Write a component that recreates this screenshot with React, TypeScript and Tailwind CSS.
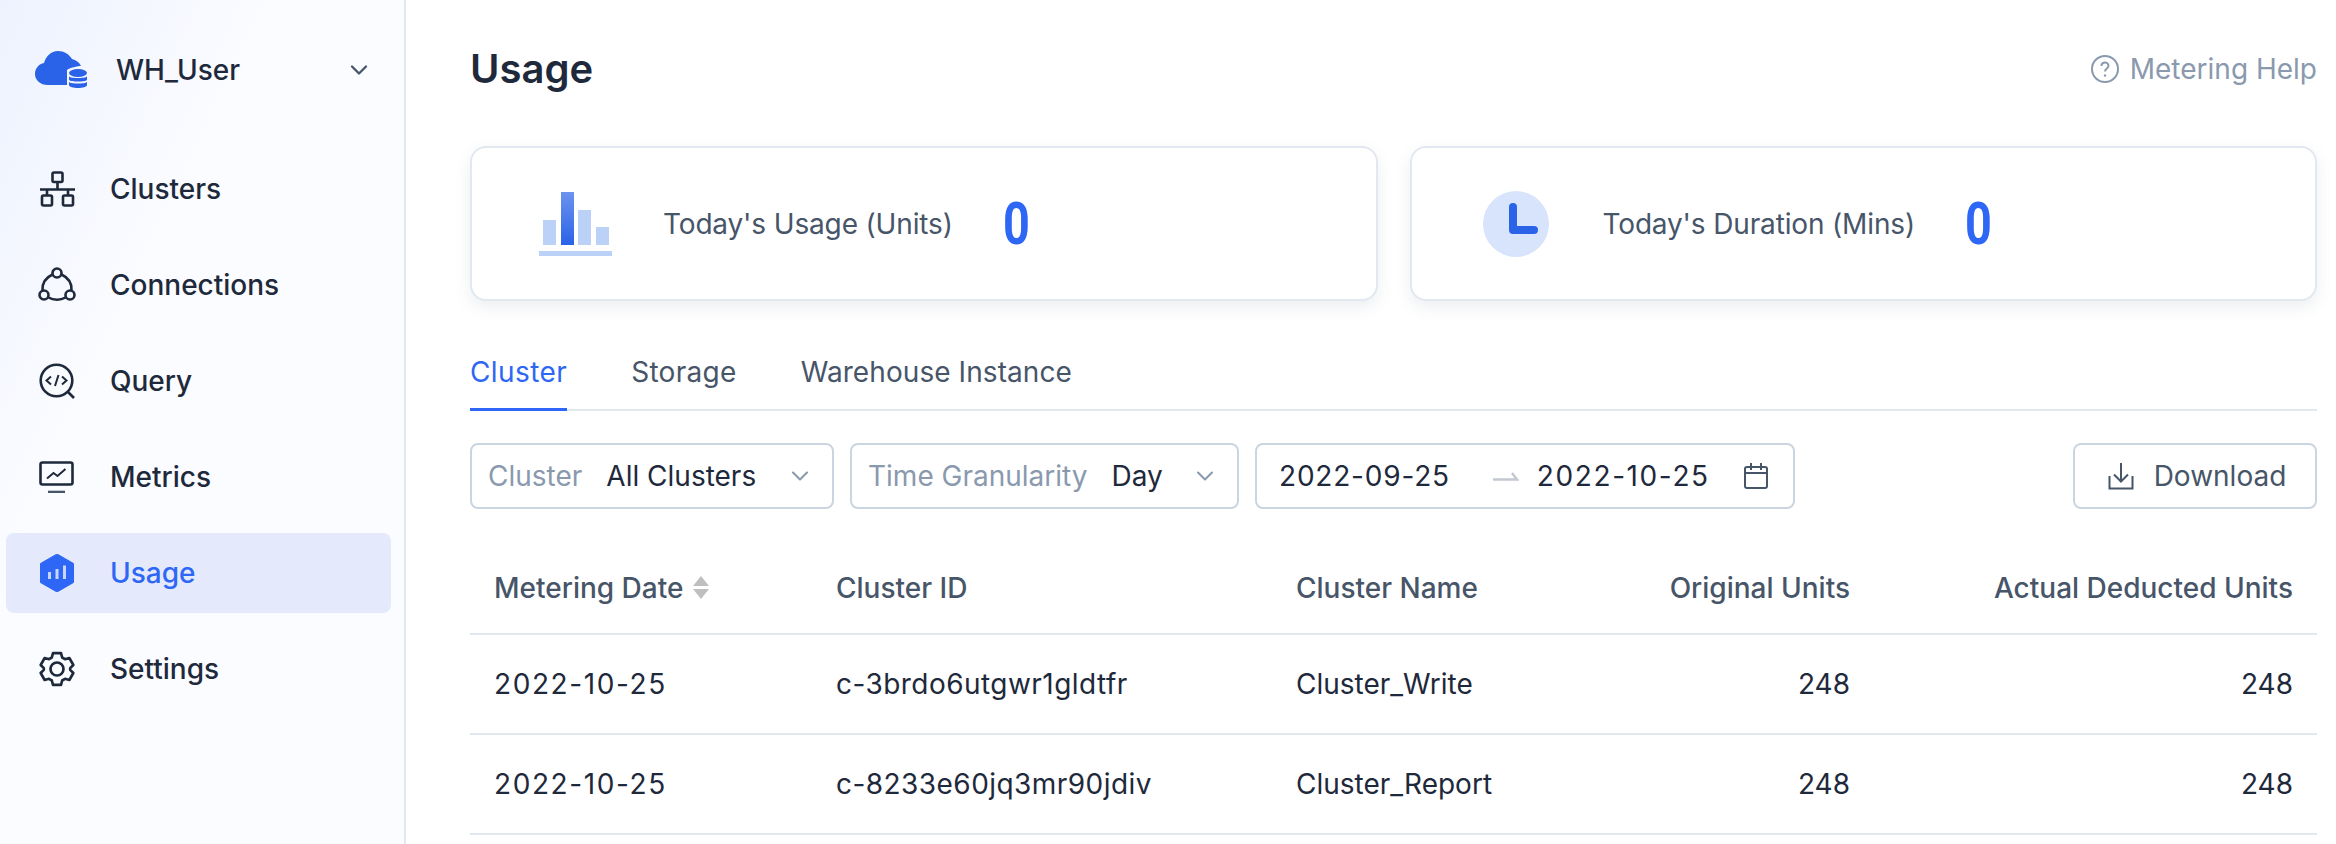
import { ChevronDown } from "lucide-react";
import type { ReactNode } from "react";

const NAV_ITEMS: { label: string; icon: ReactNode; active?: boolean }[] = [
	{
		label: "Clusters",
		icon: (
			<svg viewBox="0 0 36 36" className="w-9 h-9" fill="none" stroke="#1e293b" strokeWidth="2.6">
				<rect x="13.5" y="1.5" width="10" height="9.5" rx="1.5" />
				<rect x="3" y="24.5" width="10" height="10" rx="1.5" />
				<rect x="24" y="24.5" width="10" height="10" rx="1.5" />
				<path d="M18.500 11v7M1 18.500h35M8 18.500v6M29 18.500v6" />
			</svg>
		),
	},
	{
		label: "Connections",
		icon: (
			<svg viewBox="0 0 38 36" className="w-[38px] h-9" fill="none" stroke="#1e293b" strokeWidth="2.6">
				<circle cx="19" cy="6" r="4.500" />
				<circle cx="6" cy="28" r="4.500" />
				<circle cx="32" cy="28" r="4.500" />
				<path d="M14.500 7.500C8 10.500 4 16 4.500 23.500M23.500 7.500C30 10.500 34 16 33.500 23.500M10.500 30.500c5 3 12 3 17 0" />
			</svg>
		),
	},
	{
		label: "Query",
		icon: (
			<svg viewBox="0 0 36 36" className="w-9 h-9" fill="none" stroke="#1e293b" strokeWidth="2.6">
				<circle cx="17.500" cy="17.500" r="15.800" />
				<path d="M29 29l6 6" />
				<path d="M12 13.500l-4.500 4 4.500 4M23 13.500l4.500 4-4.500 4M19.500 12l-3.500 11" strokeWidth="2" />
			</svg>
		),
	},
	{
		label: "Metrics",
		icon: (
			<svg viewBox="0 0 36 32" className="w-9 h-8" fill="none" stroke="#1e293b" strokeWidth="2.6">
				<rect x="1.500" y="1.500" width="32" height="22" rx="2" />
				<path d="M9 31h17" strokeWidth="2.600" stroke="#475569" />
				<path d="M8 17.500l6.500-5.500 4 3 8-7" strokeWidth="2" />
			</svg>
		),
	},
	{
		label: "Usage",
		active: true,
		icon: (
			<svg viewBox="0 0 36 38" className="w-9 h-[38px]">
				<path d="M18 0l16.500 9.500v19L18 38 1.500 28.500v-19z" fill="#2e66f5" stroke="#2e66f5" strokeLinejoin="round" />
				<path d="M9 18h3v7H9zM16.500 15h3v10h-3zM24 11.500h3V25h-3z" fill="#c7d6fb" />
			</svg>
		),
	},
	{
		label: "Settings",
		icon: (
			<svg viewBox="0 0 24 24" className="w-10 h-10" fill="none" stroke="#1e293b" strokeWidth="1.600" strokeLinejoin="round">
				<path d="M9.600 2.500h4.800l.7 2.600 1.700 1 2.600-.7 2.400 4.200-1.900 1.900v1l1.900 1.900-2.400 4.200-2.600-.7-1.700 1-.7 2.600H9.600l-.7-2.600-1.700-1-2.600.7-2.400-4.200 1.900-1.900v-1L2.200 9.600l2.400-4.200 2.600.7 1.700-1z" />
				<circle cx="12" cy="12" r="3.900" />
			</svg>
		),
	},
];

const ROWS = [
	{ date: "2022-10-25", id: "c-3brdo6utgwr1gldtfr", name: "Cluster_Write" },
	{ date: "2022-10-25", id: "c-8233e60jq3mr90jdiv", name: "Cluster_Report" },
];

function Sidebar() {
	return (
		<aside className="w-[406px] shrink-0 border-r-2 border-[#e2e8f0] bg-gradient-to-br from-[#edf2fe] via-[#fbfcff] via-35% to-[#fbfcff] px-1.5">
			<div className="flex items-center h-[140px] pl-7 pr-[25px]">
				<svg viewBox="0 0 54 40" className="w-[54px] h-10 shrink-0">
					<path
						d="M14 35C6 35 1 30 1 24c0-6 4-10 9-11C12 6 17 1 24 1c6 0 11 3 14 8 4 1 7 3 9 7-3 0-12 2-14 4v15z"
						fill="#2a62e8"
					/>
					<ellipse cx="44" cy="23" rx="9" ry="4" fill="#2a62e8" />
					<path d="M35 26.500c2 2 16 2 18 0V30c-2 2-16 2-18 0zM35 32c2 2 16 2 18 0v3c0 4-18 4-18 0z" fill="#2a62e8" />
				</svg>
				<span className="ml-7 flex-1 text-[28px] font-medium text-[#1e293b]">WH_User</span>
				<ChevronDown className="w-7 h-7 text-[#475569]" />
			</div>
			<nav className="mt-[9px] flex flex-col gap-4">
				{NAV_ITEMS.map((item) => (
					<div
						key={item.label}
						className={`flex items-center h-20 w-[385px] rounded-lg ${item.active ? "bg-[#e4eafc]" : ""}`}
					>
						<div className="w-[104px] pr-[3px] flex justify-center">{item.icon}</div>
						<span className={`text-[28px] font-medium ${item.active ? "text-[#2e66f5]" : "text-[#1e293b]"}`}>
							{item.label}
						</span>
					</div>
				))}
			</nav>
		</aside>
	);
}

function StatCard({ icon, label, value }: { icon: ReactNode; label: string; value: string }) {
	return (
		<div className="flex-1 h-[155px] flex items-center rounded-2xl border-2 border-[#e2e8f0] bg-white shadow-[0_6px_16px_rgba(100,116,139,0.12)]">
			<div className="w-[191px] pl-3 flex justify-center">{icon}</div>
			<span className="text-[28px] tracking-[-0.15px] text-[#475569]">{label}</span>
			<span className="ml-[50px] text-[60px] leading-none font-bold font-['Roboto',sans-serif] text-[#2e66f5] origin-left scale-x-[0.78]">
				{value}
			</span>
		</div>
	);
}

function SelectBox({ label, value, className }: { label: string; value: string; className: string }) {
	return (
		<div className={`flex items-center h-[66px] rounded-lg border-2 border-[#cbd5e1] pl-4 pr-[18px] ${className}`}>
			<span className="text-[28px] text-[#8a99ad]">{label}</span>
			<span className="ml-6 flex-1 text-[28px] text-[#1e293b]">{value}</span>
			<ChevronDown className="w-7 h-7 text-[#8a99ad]" strokeWidth={1.800} />
		</div>
	);
}

export default function App() {
	return (
		<div className="flex h-[844px] overflow-hidden bg-white font-['Inter',sans-serif]">
			<Sidebar />
			<main className="flex-1 min-w-0 pl-16 pr-[19px]">
				<div className="flex items-center justify-between h-[140px] pb-[2px]">
					<h1 className="text-[40px] font-semibold text-[#1e293b]">Usage</h1>
					<div className="flex items-center gap-[11px] text-[28px] text-[#8a99ad]">
						<svg viewBox="0 0 28 28" className="w-7 h-7" fill="none" stroke="#8a99ad" strokeWidth="2">
							<circle cx="14" cy="14" r="13" />
							<path d="M10.500 11c0-2 1.500-3.500 3.500-3.500s3.500 1.500 3.500 3.300c0 2.700-3.500 2.700-3.500 5.700" />
							<circle cx="14" cy="20.500" r="1.200" fill="#8a99ad" stroke="none" />
						</svg>
						Metering Help
					</div>
				</div>

				<div className="mt-1.5 flex gap-8">
					<StatCard
						label="Today's Usage (Units)"
						value="0"
						icon={
							<svg viewBox="0 0 73 64" className="w-[73px] h-16 ml-[3px]">
								<defs>
									<linearGradient id="bar" x1="0" y1="0" x2="0" y2="1">
										<stop offset="0" stopColor="#6c93ee" />
										<stop offset="1" stopColor="#2a62e8" />
									</linearGradient>
								</defs>
								<rect x="4" y="28" width="13" height="25" fill="#bcd1f8" />
								<rect x="22" y="0" width="13" height="53" fill="url(#bar)" />
								<rect x="39" y="18" width="13" height="35" fill="#bcd1f8" />
								<rect x="57" y="35" width="13" height="18" fill="#bcd1f8" />
								<rect x="0" y="59" width="73" height="5" fill="#bcd1f8" />
							</svg>
						}
					/>
					<StatCard
						label="Today's Duration (Mins)"
						value="0"
						icon={
							<svg viewBox="0 0 66 66" className="w-[66px] h-[66px] ml-1.5">
								<circle cx="33" cy="33" r="33" fill="#d8e4fb" />
								<path d="M30 16v23h21" fill="none" stroke="#2a62e8" strokeWidth="8" strokeLinecap="round" strokeLinejoin="round" />
							</svg>
						}
					/>
				</div>

				<div className="mt-[50px] flex gap-16 h-[60px] border-b-2 border-[#e2e8f0] text-[28px] text-[#475569]">
					<div className="h-[60px] tracking-[0.4px] border-b-[3px] border-[#2e66f5] text-[#2e66f5]">Cluster</div>
					<div className="tracking-[0.3px]">Storage</div>
					<div className="tracking-[0.08px]">Warehouse Instance</div>
				</div>

				<div className="mt-8 flex items-center gap-4">
					<SelectBox label="Cluster" value="All Clusters" className="w-[364px]" />
					<SelectBox label="Time Granularity" value="Day" className="w-[389px]" />
					<div className="flex items-center w-[540px] h-[66px] rounded-lg border-2 border-[#cbd5e1] pl-[22px] pr-[25px] text-[28px] text-[#1e293b]">
						<span className="tracking-[0.8px]">2022-09-25</span>
						<svg viewBox="0 0 26 12" className="ml-[43px] mr-[18px] w-[26px] h-3" fill="none" stroke="#c4c9d1" strokeWidth="2.500">
							<path d="M0 9.500h24L19 3" />
						</svg>
						<span className="tracking-[1.6px]">2022-10-25</span>
						<svg viewBox="0 0 24 26" className="ml-auto w-6 h-[26px]" fill="none" stroke="#475569" strokeWidth="2">
							<rect x="1" y="4" width="22" height="21" rx="2" />
							<path d="M1 10h22M7 0v7M17 0v7" />
						</svg>
					</div>
					<div className="ml-auto flex items-center justify-center gap-[20px] w-[244px] h-[66px] pl-1 rounded-lg border-2 border-[#cbd5e1] text-[28px] text-[#475569]">
						<svg viewBox="0 0 26 28" className="w-[26px] h-7" fill="none" stroke="#475569" strokeWidth="2">
							<path d="M13 1v18M6 12.500l7 7 7-7" />
							<path d="M1.500 14v12.500h23V14" />
						</svg>
						Download
					</div>
				</div>

				<table className="mt-[31px] w-full table-fixed text-[28px]">
					<colgroup>
						<col className="w-[342px]" />
						<col className="w-[460px]" />
						<col className="w-[330px]" />
						<col className="w-[272px]" />
						<col />
					</colgroup>
					<thead className="text-[#475569]">
						<tr className="h-[94px] border-b-2 border-[#e2e8f0]">
							<th className="pl-6 pt-[2px] text-left font-medium">
								<span className="inline-flex items-center gap-[10px]">
									Metering Date
									<span className="flex flex-col gap-[3px]">
										<span className="w-0 h-0 border-x-[8px] border-x-transparent border-b-[10px] border-b-[#bfbfbf]" />
										<span className="w-0 h-0 border-x-[8px] border-x-transparent border-t-[10px] border-t-[#bfbfbf]" />
									</span>
								</span>
							</th>
							<th className="pl-6 pt-[2px] text-left font-medium">Cluster ID</th>
							<th className="pl-6 pt-[2px] text-left font-medium">Cluster Name</th>
							<th className="pr-6 pt-[2px] text-right font-medium">Original Units</th>
							<th className="pr-6 pt-[2px] text-right font-medium">Actual Deducted Units</th>
						</tr>
					</thead>
					<tbody className="text-[#1e293b]">
						{ROWS.map((row) => (
							<tr key={row.id} className="h-[100px] border-b-2 border-[#e2e8f0]">
								<td className="pl-6 tracking-[1.6px]">{row.date}</td>
								<td className="pl-6 tracking-[0.45px]">{row.id}</td>
								<td className="pl-6">{row.name}</td>
								<td className="pr-6 text-right">248</td>
								<td className="pr-6 text-right">248</td>
							</tr>
						))}
					</tbody>
				</table>
			</main>
		</div>
	);
}
